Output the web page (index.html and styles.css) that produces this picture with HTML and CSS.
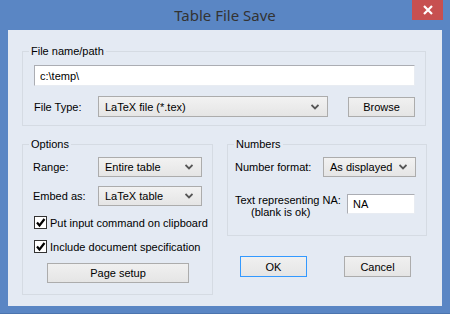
FILE: index.html
```html
<!DOCTYPE html>
<html lang="en">
<head>
    <meta charset="UTF-8">
    <meta name="viewport" content="width=device-width, initial-scale=1.0">
    <title>Table File Save</title>
    <link rel="stylesheet" href="styles.css">
</head>
<body>

    <div class="window">
        <div class="titlebar">
            <span class="title">Table File Save</span>
            <div class="close">
                <svg width="10" height="10" viewBox="0 0 10 10">
                    <path d="M1 1 L9 9 M9 1 L1 9" stroke="#fff" stroke-width="2.2" />
                </svg>
            </div>
        </div>

        <div class="client">
            <!-- File name / path group -->
            <div class="group group-file">
                <span class="legend">File name/path</span>
                <input type="text" class="textbox path" value="c:\temp\">
                <div class="row file-row">
                    <label class="file-label">File Type:</label>
                    <div class="combo file-combo">
                        <span>LaTeX file (*.tex)</span>
                        <svg class="chev" width="8" height="6" viewBox="0 0 8 6"><path d="M0.5 1 L4 4.5 L7.5 1" fill="none" stroke="#555" stroke-width="1.8" /></svg>
                    </div>
                    <button class="btn browse">Browse</button>
                </div>
            </div>

            <div class="lower">
                <!-- Options group -->
                <div class="group group-options">
                    <span class="legend">Options</span>
                    <div class="row">
                        <label class="opt-label">Range:</label>
                        <div class="combo opt-combo">
                            <span>Entire table</span>
                            <svg class="chev" width="8" height="6" viewBox="0 0 8 6"><path d="M0.5 1 L4 4.5 L7.5 1" fill="none" stroke="#555" stroke-width="1.8" /></svg>
                        </div>
                    </div>
                    <div class="row row-gap">
                        <label class="opt-label">Embed as:</label>
                        <div class="combo opt-combo">
                            <span>LaTeX table</span>
                            <svg class="chev" width="8" height="6" viewBox="0 0 8 6"><path d="M0.5 1 L4 4.5 L7.5 1" fill="none" stroke="#555" stroke-width="1.8" /></svg>
                        </div>
                    </div>
                    <div class="check check-first">
                        <span class="box"><svg width="11" height="11" viewBox="0 0 11 11"><path d="M2 5.5 L4.5 8.5 L9.5 2" fill="none" stroke="#000" stroke-width="2.2" /></svg></span>
                        <span>Put input command on clipboard</span>
                    </div>
                    <div class="check check-second">
                        <span class="box"><svg width="11" height="11" viewBox="0 0 11 11"><path d="M2 5.5 L4.5 8.5 L9.5 2" fill="none" stroke="#000" stroke-width="2.2" /></svg></span>
                        <span>Include document specification</span>
                    </div>
                    <button class="btn page-setup">Page setup</button>
                </div>

                <div class="right-col">
                    <!-- Numbers group -->
                    <div class="group group-numbers">
                        <span class="legend">Numbers</span>
                        <div class="row">
                            <label class="num-label">Number format:</label>
                            <div class="combo num-combo">
                                <span>As displayed</span>
                                <svg class="chev" width="8" height="6" viewBox="0 0 8 6"><path d="M0.5 1 L4 4.5 L7.5 1" fill="none" stroke="#555" stroke-width="1.8" /></svg>
                            </div>
                        </div>
                        <div class="row na-row">
                            <div class="na-label">
                                <span>Text representing NA:</span>
                                <span class="na-note">(blank is ok)</span>
                            </div>
                            <input type="text" class="textbox na" value="NA">
                        </div>
                    </div>

                    <div class="actions">
                        <button class="btn ok">OK</button>
                        <button class="btn cancel">Cancel</button>
                    </div>
                </div>
            </div>
        </div>
    </div>

</body>
</html>
```

FILE: styles.css
```css
* {
    box-sizing: border-box;
}

body {
    margin: 0;
    font-family: "Liberation Sans", Arial, sans-serif;
    font-size: 11px;
    color: #000;
    background-color: #5a86c4;
    white-space: nowrap;
}

.window {
    width: 450px;
    height: 314px;
    background-color: #5a86c4;
    border-bottom: 1px solid #4b74ae;
}

.titlebar {
    height: 30px;
    display: flex;
    justify-content: center;
    align-items: center;
    position: relative;
}

.title {
    font-family: "Noto Sans", sans-serif;
    font-size: 15px;
    color: #333;
    padding-bottom: 1px;
}

.close {
    position: absolute;
    top: 0;
    left: 412px;
    width: 31px;
    height: 20px;
    background-color: #c75050;
    display: flex;
    justify-content: center;
    align-items: center;
}

.client {
    margin: 0 8px;
    height: 276px;
    background-color: #e4eaf3;
    padding: 21px 0 0 14px;
}

.group {
    position: relative;
    border: 1px solid #d5dbe3;
}

.legend {
    position: absolute;
    top: -8px;
    left: 6px;
    padding: 0 2px;
    background-color: #e4eaf3;
    line-height: 14px;
}

.row {
    display: flex;
    align-items: center;
}

label {
    flex: none;
}

/* text boxes */
.textbox {
    font-family: inherit;
    font-size: 11px;
    height: 21px;
    padding: 0 5px;
    border: 1px solid #e8ecf2;
    border-top-color: #abadb3;
    border-left-color: #abadb3;
    background-color: #fff;
    outline: none;
}

/* combo boxes */
.combo {
    height: 21px;
    display: flex;
    align-items: center;
    justify-content: space-between;
    padding: 0 8px 0 6px;
    border: 1px solid #acacac;
    background: linear-gradient(#f2f2f2, #e5e5e5);
}

/* buttons */
.btn {
    font-family: inherit;
    font-size: 11px;
    color: #000;
    height: 21px;
    padding: 0;
    border: 1px solid #acacac;
    background: linear-gradient(#f0f0f0, #e5e5e5);
}

/* file group */
.group-file {
    width: 404px;
    height: 75px;
    padding: 13px 0 0 11px;
}

.path {
    width: 381px;
}

.file-row {
    margin-top: 10px;
}

.file-label {
    width: 64px;
}

.file-combo {
    width: 230px;
}

.browse {
    width: 67px;
    height: 20px;
    margin-left: 20px;
}

/* lower part */
.lower {
    display: flex;
    margin-top: 18px;
}

.group-options {
    width: 191px;
    height: 151px;
    padding: 12px 0 0 10px;
}

.opt-label {
    width: 65px;
}

.opt-combo {
    width: 104px;
    height: 20px;
}

.row-gap {
    margin-top: 9px;
}

.check {
    display: flex;
    align-items: center;
    height: 13px;
    margin-left: 1px;
}

.check-first {
    margin-top: 10px;
}

.check-second {
    margin-top: 11px;
}

.box {
    width: 13px;
    height: 13px;
    border: 1px solid #333;
    background-color: #fff;
    margin-right: 3px;
    display: flex;
    justify-content: center;
    align-items: center;
}

.page-setup {
    width: 142px;
    height: 20px;
    margin: 10px 0 0 14px;
}

.right-col {
    margin-left: 14px;
}

.group-numbers {
    width: 200px;
    height: 92px;
    padding: 12px 0 0 7px;
}

.num-label {
    width: 88px;
}

.num-combo {
    width: 93px;
    height: 20px;
}

.na-row {
    margin-top: 13px;
}

.na-label {
    width: 112px;
    display: flex;
    flex-direction: column;
    line-height: 12px;
    padding-top: 4px;
}

.na-note {
    padding-left: 16px;
}

.na {
    width: 68px;
    height: 20px;
}

.actions {
    display: flex;
    margin: 20px 0 0 13px;
}

.ok {
    width: 67px;
    border-color: #3399ff;
}

.cancel {
    width: 67px;
    margin-left: 37px;
}
```
